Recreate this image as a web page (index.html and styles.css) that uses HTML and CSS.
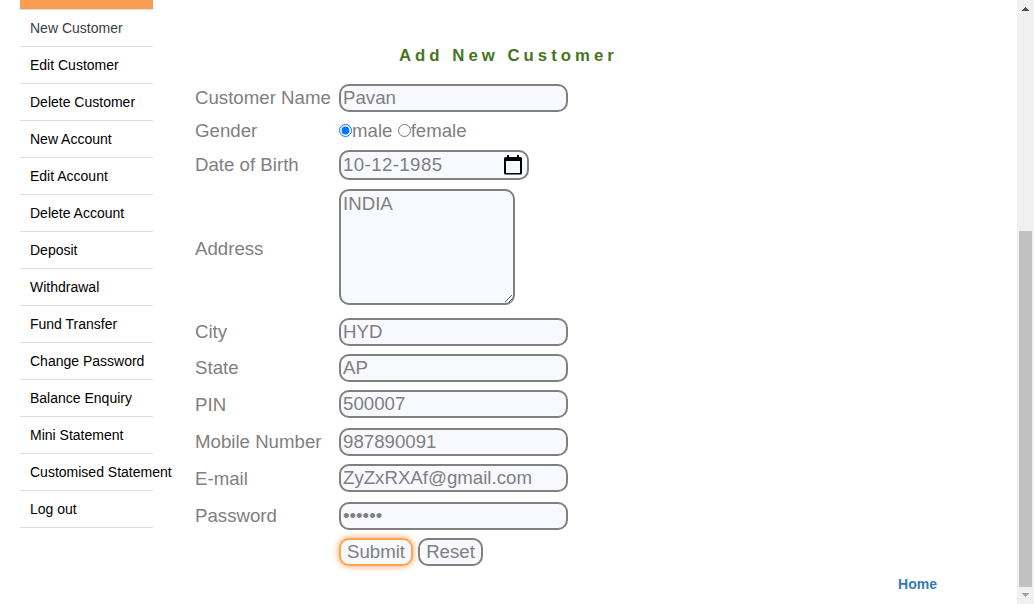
FILE: index.html
```html
<!DOCTYPE html>
<html lang="en">
<head>
<meta charset="utf-8">
<title>Add New Customer</title>
<link rel="stylesheet" href="styles.css">
</head>
<body>
<div class="page">
  <nav class="sidebar">
    <div class="active-bar"></div>
    <ul class="menu">
      <li><a class="current">New Customer</a></li>
      <li><a>Edit Customer</a></li>
      <li><a>Delete Customer</a></li>
      <li><a>New Account</a></li>
      <li><a>Edit Account</a></li>
      <li><a>Delete Account</a></li>
      <li><a>Deposit</a></li>
      <li><a>Withdrawal</a></li>
      <li><a>Fund Transfer</a></li>
      <li><a>Change Password</a></li>
      <li><a>Balance Enquiry</a></li>
      <li><a>Mini Statement</a></li>
      <li><a>Customised Statement</a></li>
      <li><a>Log out</a></li>
    </ul>
  </nav>
  <main class="content">
    <h1 class="title">Add New Customer</h1>
    <form class="form">
      <label>Customer Name</label><div class="cell"><input class="field" type="text" value="Pavan"></div>
      <label>Gender</label><div class="cell gender"><input type="radio" name="g" checked>male <input type="radio" name="g" class="second">female</div>
      <label>Date of Birth</label>
      <div class="cell"><div class="field date"><span>10-12-1985</span>
        <svg width="18" height="20" viewBox="0 0 18 20"><path fill="#000" fill-rule="evenodd" d="M3 0h2v2h8V0h2v2h1.500a1.500 1.500 0 0 1 1.500 1.500v14.500a1.500 1.500 0 0 1-1.500 1.500h-15A1.500 1.500 0 0 1 0 18v-14.500A1.500 1.500 0 0 1 1.500 2H3zM2 6v12h14V6z"/></svg>
      </div></div>
      <label>Address</label><div class="cell"><textarea class="field area">INDIA</textarea></div>
      <label>City</label><div class="cell"><input class="field" type="text" value="HYD"></div>
      <label>State</label><div class="cell"><input class="field" type="text" value="AP"></div>
      <label>PIN</label><div class="cell"><input class="field" type="text" value="500007"></div>
      <label>Mobile Number</label><div class="cell"><input class="field" type="text" value="987890091"></div>
      <label>E-mail</label><div class="cell"><input class="field" type="text" value="ZyZxRXAf@gmail.com"></div>
      <label>Password</label><div class="cell"><input class="field" type="password" value="secret"></div>
      <span></span><div class="cell buttons"><button type="button" class="btn submit">Submit</button><button type="button" class="btn reset">Reset</button></div>
    </form>
    <a class="home">Home</a>
  </main>
  <div class="scrollbar">
    <svg class="arrow" width="17" height="17" viewBox="0 0 17 17" shape-rendering="crispEdges"><path fill="#505050" d="M8 7h1v1h1v1h1v1h1v1H5v-1h1V9h1V8h1z"/></svg>
    <div class="thumb"></div>
    <svg class="arrow" width="17" height="17" viewBox="0 0 17 17" shape-rendering="crispEdges"><path fill="#a3a3a3" d="M5 6h7v1h-1v1h-1v1H9v1H8V9H7V8H6V7H5z"/></svg>
  </div>
</div>
</body>
</html>
```
FILE: styles.css
```css
* { box-sizing: border-box; }
body {
  margin: 0;
  background: #fff;
  font-family: "Liberation Sans", Arial, sans-serif;
  overflow: hidden;
}
.page { display: flex; height: 604px; }
.sidebar { width: 133px; margin-left: 20px; }
.active-bar { height: 9px; background: #f99d52; }
.menu { list-style: none; margin: 0; padding: 0; border-top: 1px solid #ddd; }
.menu li {
  height: 37px;
  padding-left: 10px;
  border-bottom: 1px solid #ddd;
  font-size: 14px;
  line-height: 36px;
  white-space: nowrap;
  color: #000;
}
.current { color: #3c3c46; }
.content { flex: 1; padding: 44px 0 0 42px; }
.title {
  margin: 0 0 12px 204px;
  height: 24px;
  font-size: 16.8px;
  line-height: 24px;
  letter-spacing: 4px;
  color: #47751f;
}
.form {
  display: grid;
  grid-template-columns: 144px 1fr;
  grid-template-rows: 36px 30px 38px 130px 36px 36px 38px 36px 38px 36px 36px;
  font-size: 18.67px;
  color: gray;
}
.form label { align-self: center; line-height: 24px; }
.cell { padding-top: 4px; }
.field, .btn {
  display: block;
  height: 28px;
  margin: 0;
  border: 2px solid gray;
  border-radius: 10px;
  background: #f8f8ff;
  color: gray;
  font: 18.67px "Liberation Sans", Arial, sans-serif;
}
.field { width: 229px; padding: 0 2px 1px; }
.date {
  display: flex;
  justify-content: space-between;
  width: 190px;
  height: 30px;
  padding: 0 5px 0 2px;
  line-height: 25px;
  letter-spacing: 0.4px;
}
.date svg { margin-top: 3px; }
.area { width: 176px; height: 116px; margin-top: 1px; padding: 2px; resize: both; }
.gender { line-height: 24px; padding-top: 3px; display: flex; white-space: pre; }
.gender input { width: 13px; height: 13px; margin: 5px 0 0; }
.buttons { display: flex; gap: 5px; }
.btn { padding: 0 0 1px; }
.submit { width: 74px; border-color: #ffa550; box-shadow: 0 0 7px #ffa04a; }
.reset { width: 65px; }
.home {
  display: block;
  margin: 4px 80px 0 0;
  text-align: right;
  font-size: 14px;
  font-weight: bold;
  line-height: 20px;
  color: #337ab7;
}
.scrollbar {
  display: flex;
  flex-direction: column;
  width: 17px;
  background: #f0f0f0;
}
.thumb { width: 13px; height: 356px; margin: auto 2px 0; background: #c1c1c1; }
.arrow { display: block; }
```
